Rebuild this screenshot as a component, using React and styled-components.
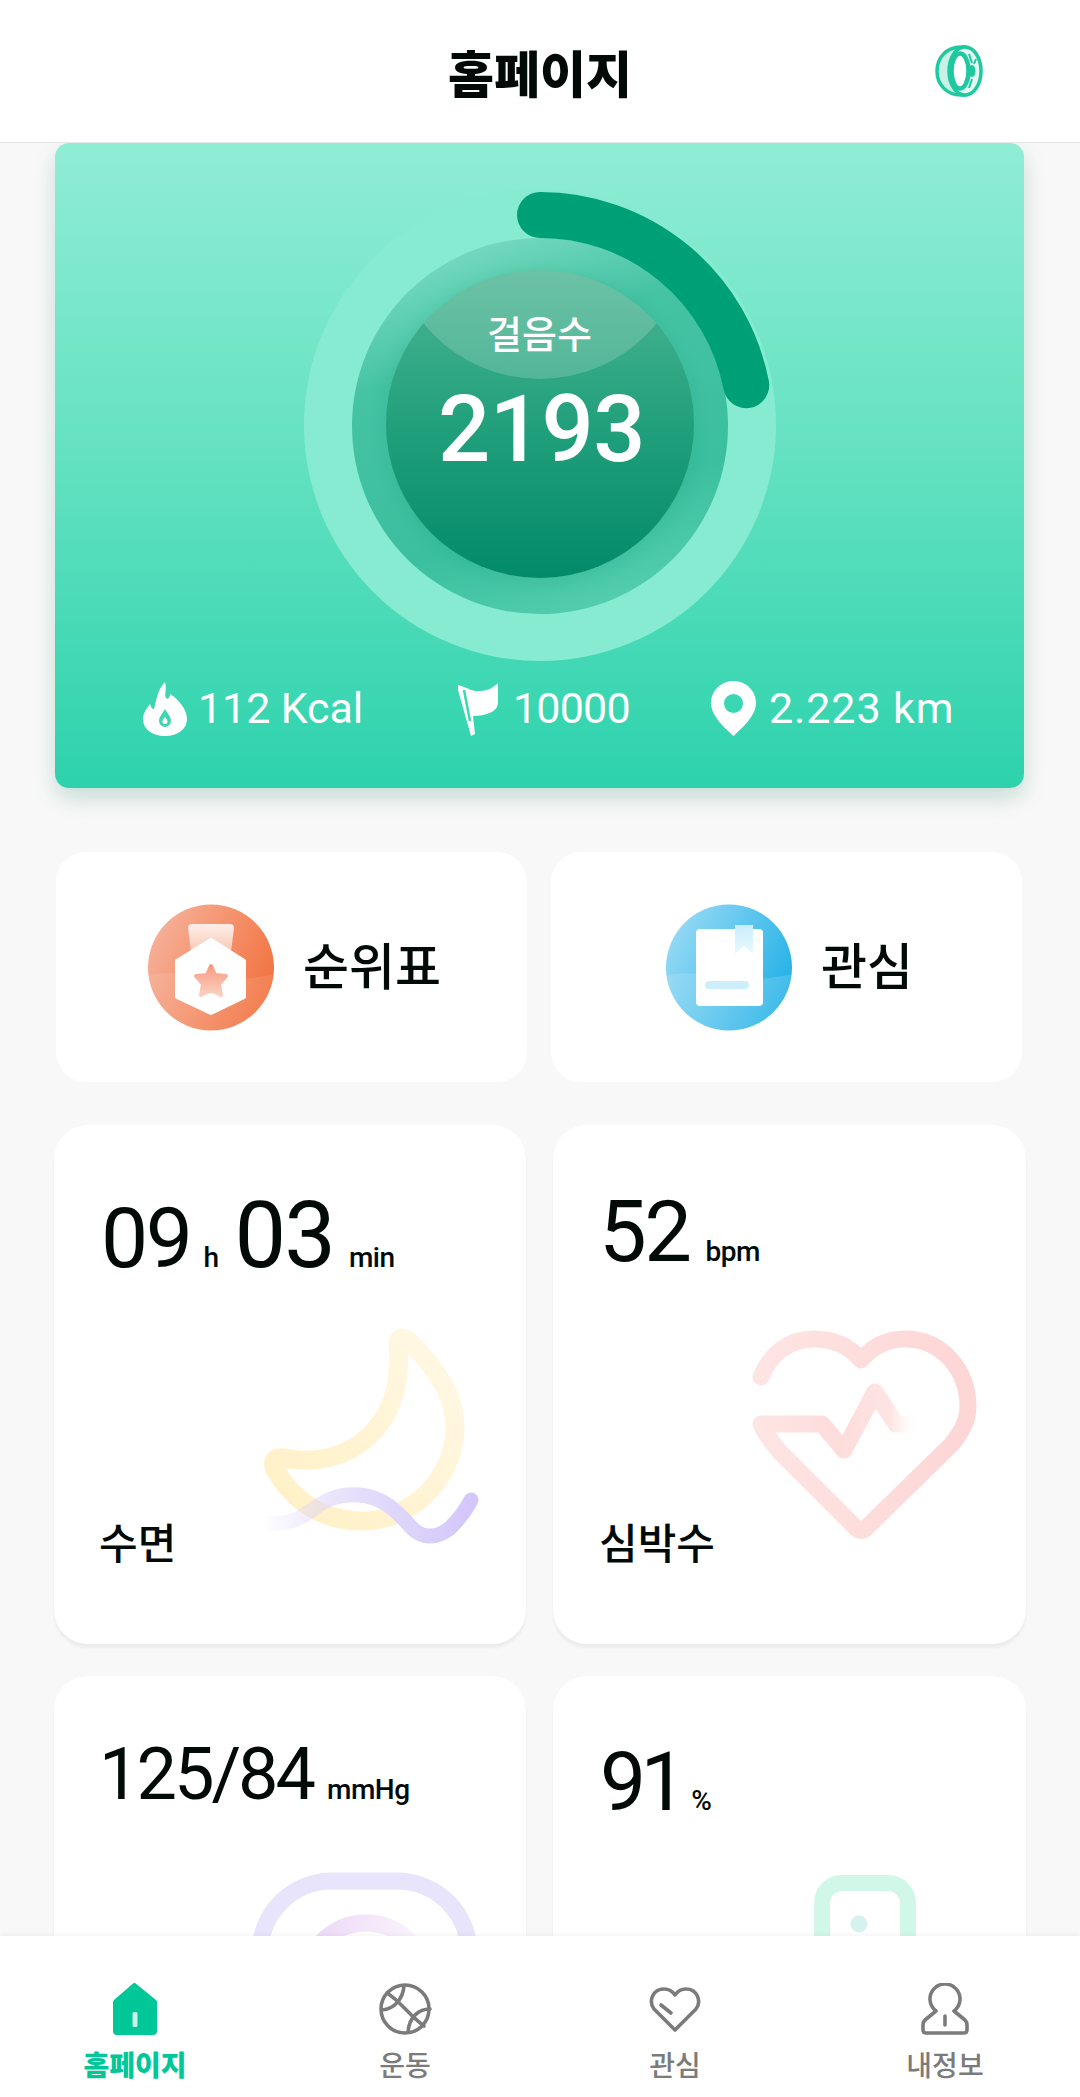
import React from "react";
import styled, { createGlobalStyle } from "styled-components";

const Global = createGlobalStyle`
  html, body { margin: 0; padding: 0; background: #f8f8f8; }
  * { box-sizing: border-box; }
`;
const KR = `"Noto Sans CJK KR", "Noto Sans", sans-serif`;
const NUM = `Roboto, "Noto Sans CJK KR", sans-serif`;

const Page = styled.div`
  width: 1080px; height: 2097px; display: flex; flex-direction: column; overflow: hidden; background: #f8f8f8; font-family: ${KR};
`;
const Header = styled.header`
  flex: none; height: 143px; background: #fff; border-bottom: 1px solid #e6e6e6; position: relative;
  display: flex; align-items: center; justify-content: center;
`;
const Title = styled.h1`
  margin: 0; font-size: 50px; line-height: 1; font-weight: 900; color: #020a08;
`;
const RingButton = styled.div`
  position: absolute; left: 935px; top: 45px; width: 48px; height: 52px; display: flex;
`;
const Main = styled.main`
  flex: 1; min-height: 0; overflow: hidden;
`;
const Hero = styled.section`
  width: 969px; height: 645px; margin-left: 55px; border-radius: 14px;
  background: linear-gradient(180deg, #90edd5 0%, #62e1c0 50%, #2dd2ad 100%);
  box-shadow: 0 10px 22px rgba(0, 110, 80, 0.2);
  padding-top: 46px;
`;
const Gauge = styled.div`
  position: relative; width: 472px; height: 472px; margin: 0 auto; display: flex;
`;
const GaugeText = styled.div`
  position: absolute; left: 0; right: 0; top: 116px; display: flex; flex-direction: column; align-items: center; color: #fff;
`;
const GaugeLabel = styled.div`
  font-size: 38px; line-height: 54px; font-weight: 500;
`;
const GaugeValue = styled.div`
  font-family: ${NUM}; font-size: 92px; line-height: 110px; font-weight: 500; margin: 16px 0 0 4px; letter-spacing: -0.5px;
`;
const StatRow = styled.div`
  display: flex; margin-top: 20px; padding-left: 88px;
`;
const Stat = styled.div`
  width: ${p => p.$w}px; display: flex; align-items: center; gap: ${p => p.$gap}px; color: #fff;
  font-family: ${NUM}; font-size: 43px; font-weight: 400; line-height: 55px; letter-spacing: ${p => p.$ls}px; white-space: nowrap;
`;
const Actions = styled.div`
  display: flex; gap: 24px; margin: 64px 0 0 56px;
`;
const Action = styled.div`
  width: 471px; height: 230px; background: #fff; border-radius: 30px; display: flex; align-items: center;
  padding-left: ${p => p.$pad}px; gap: 29px;
  font-size: 50px; font-weight: 500; color: #020a08;
`;
const ActionText = styled.span`
  margin-bottom: 8px;
`;
const StatGrid = styled.div`
  display: grid; grid-template-columns: 472px 473px; column-gap: 27px; row-gap: 32px; margin: 43px 0 0 54px;
`;
const Card = styled.div`
  position: relative; height: 519px; background: #fff; border-radius: 34px;
  box-shadow: 0 4px 3px rgba(0, 0, 0, 0.05);
  padding: ${p => p.$top}px 0 0 ${p => p.$left}px;
  color: #020a08; overflow: hidden;
`;
const ValueLine = styled.div`
  display: flex; align-items: baseline; font-family: ${NUM}; height: 84px; line-height: 84px; white-space: nowrap;
`;
const Big = styled.span`
  font-size: ${p => p.$s}px; font-weight: 400; letter-spacing: ${p => p.$ls ?? -2.5}px;
  margin-right: ${p => p.$mr ?? 0}px;
`;
const Unit = styled.span`
  font-size: ${p => p.$s ?? 28}px; font-weight: 500; letter-spacing: -0.5px; margin-right: ${p => p.$mr ?? 0}px; margin-left: ${p => p.$ml ?? 16}px;
`;
const CardLabel = styled.div`
  position: absolute; left: ${p => p.$left}px; top: 384px; font-size: 42px; line-height: 64px; font-weight: 500;
`;
const Art = styled.svg`
  position: absolute; left: 0; top: 0; width: 100%; height: 100%; pointer-events: none;
`;
const Nav = styled.nav`
  flex: none; height: 161px; background: #fff; box-shadow: 0 -2px 4px rgba(0, 0, 0, 0.04); position: relative;
  display: grid; grid-template-columns: repeat(4, 270px); padding-top: 47px;
`;
const NavItem = styled.div`
  display: flex; flex-direction: column; align-items: center; color: ${p => (p.$active ? "#00c797" : "#7b7b7b")};
  font-size: 28px; font-weight: ${p => (p.$active ? 900 : 500)}; line-height: 40px;
`;
const NavIcon = styled.svg`
  width: 54px; height: 52px; margin-bottom: 9px; display: block;
`;

const Ring = () => (
  <svg width="48" height="52" viewBox="0 0 48 52">
    <path d="M26 2C11 2 2 13 2 26s9 24 24 24h4V2z" fill="#c9f2e6" stroke="#1fc9a0" strokeWidth="3.500" />
    <ellipse cx="30" cy="26" rx="16" ry="24" fill="#e3f8f1" stroke="#1fc9a0" strokeWidth="3.500" />
    <ellipse cx="25" cy="26" rx="8.500" ry="17.500" fill="#fff" stroke="#1fc9a0" strokeWidth="4.500" />
    <ellipse cx="37" cy="26" rx="3.500" ry="6" fill="#1fc9a0" />
    <path d="M34 9l3 9M41 14l-2 5M34 43l3-9" stroke="#1fc9a0" strokeWidth="2" />
  </svg>
);

const GaugeArt = () => (
  <svg width="472" height="472" viewBox="0 0 472 472">
    <defs>
      <linearGradient id="disc" x1="0.25" y1="0" x2="0.6" y2="1">
        <stop offset="0" stopColor="#7bdcc3" />
        <stop offset="0.3" stopColor="#45c3a3" />
        <stop offset="0.75" stopColor="#3bbf9e" />
        <stop offset="1" stopColor="#52cdad" />
      </linearGradient>
      <linearGradient id="core" x1="0" y1="0" x2="0" y2="1">
        <stop offset="0" stopColor="#4cb592" />
        <stop offset="0.5" stopColor="#22a07c" />
        <stop offset="1" stopColor="#028a69" />
      </linearGradient>
      <clipPath id="coreClip"><circle cx="236" cy="235" r="154" /></clipPath>
      <filter id="soft" x="-30%" y="-30%" width="160%" height="160%"><feGaussianBlur stdDeviation="8" /></filter>
    </defs>
    <circle cx="236" cy="236" r="236" fill="#86ebd1" />
    <circle cx="236" cy="237" r="188" fill="url(#disc)" />
    <circle cx="236" cy="238" r="156" fill="#0f8f6c" opacity="0.16" filter="url(#soft)" />
    <circle cx="236" cy="235" r="154" fill="url(#core)" />
    <g clipPath="url(#coreClip)"><circle cx="236" cy="40" r="150" fill="#fff" opacity="0.18" /></g>
    <path d="M236 26A210 210 0 0 1 442.200 196.200" fill="none" stroke="#00a077" strokeWidth="46" strokeLinecap="round" />
  </svg>
);

const Fire = () => (
  <svg width="44" height="54" viewBox="0 0 44 54">
    <path d="M22 0c2 8-1 12 1 16 2 2 4-1 4-4 8 5 17 15 17 25 0 10-9 17-22 17S0 47 0 37c0-6 4-11 7-15 1 3 2 5 4 5 2-7 3-19 11-27z" fill="#fff" />
    <path d="M22 27c3 5 6 8 6 12a6 6 0 0 1-12 0c0-4 3-7 6-12z" fill="#3fd7b3" />
    <path d="M22 35c1.500 2 2.500 3 2.500 4.500a2.500 2.500 0 0 1-5 0c0-1.500 1-2.500 2.500-4.500z" fill="#fff" />
  </svg>
);
const Flag = () => (
  <svg width="40" height="54" viewBox="0 0 40 54">
    <path d="M0 3c10 3 15 7 22 6 7 0 13-3 18-8 0 10 1 18-1 24-3 6-14 9-24 9L17 52l-4 2L0 8z" fill="#fff" />
    <path d="M6 8l6 31" stroke="#3fd7b3" strokeWidth="2.500" />
  </svg>
);
const Pin = () => (
  <svg width="45" height="55" viewBox="0 0 45 55">
    <path fillRule="evenodd" d="M22.500 0C35 0 45 10 45 22c0 13-14 25-22.500 33C14 47 0 35 0 22 0 10 10 0 22.500 0zm0 13a9.500 9.500 0 1 0 0 19 9.500 9.500 0 0 0 0-19z" fill="#fff" />
  </svg>
);

const Medal = () => (
  <svg width="126" height="127" viewBox="0 0 126 127">
    <defs>
      <linearGradient id="org" x1="0" y1="0.2" x2="1" y2="0.7">
        <stop offset="0" stopColor="#f6b39c" />
        <stop offset="1" stopColor="#f2703c" />
      </linearGradient>
      <linearGradient id="cap" x1="0" y1="0" x2="0" y2="1">
        <stop offset="0" stopColor="#fdeee8" />
        <stop offset="1" stopColor="#f9c9b6" />
      </linearGradient>
      <linearGradient id="star" x1="0" y1="0" x2="0" y2="1">
        <stop offset="0" stopColor="#f79d80" />
        <stop offset="1" stopColor="#fbcfc0" />
      </linearGradient>
    </defs>
    <circle cx="63" cy="63.500" r="63" fill="url(#org)" />
    <path d="M0.500 72c30-10 70 12 125-2-4 32-30 57-62 57C30 127 4 102 0.500 72z" fill="#fff" opacity="0.1" />
    <path d="M40 24a4 4 0 0 1 4-4h38a4 4 0 0 1 4 4l-3 24H43z" fill="url(#cap)" />
    <path d="M63 36l33 21v36L63 109 29 93V57z" fill="#fff" stroke="#fff" strokeWidth="4" strokeLinejoin="round" />
    <path d="M63 62l4 9 11 1-7 8 2 11-10-5-10 5 2-11-7-8 11-1z" fill="url(#star)" stroke="url(#star)" strokeWidth="4" strokeLinejoin="round" />
  </svg>
);
const Book = () => (
  <svg width="126" height="127" viewBox="0 0 126 127">
    <defs>
      <linearGradient id="blu" x1="0" y1="0.2" x2="1" y2="0.7">
        <stop offset="0" stopColor="#9adbf5" />
        <stop offset="1" stopColor="#20b0e6" />
      </linearGradient>
      <linearGradient id="mark" x1="0" y1="0" x2="0" y2="1">
        <stop offset="0" stopColor="#c9edfa" />
        <stop offset="1" stopColor="#eafaff" />
      </linearGradient>
    </defs>
    <circle cx="63" cy="63.500" r="63" fill="url(#blu)" />
    <path d="M0.500 72c30-10 70 12 125-2-4 32-30 57-62 57C30 127 4 102 0.500 72z" fill="#fff" opacity="0.14" />
    <rect x="30" y="25" width="67" height="77" rx="4" fill="#fff" />
    <path d="M69 21h18v29l-9-8-9 8z" fill="url(#mark)" />
    <rect x="39" y="77" width="44" height="8" rx="4" fill="#cdeffa" />
  </svg>
);

const Moon = () => (
  <Art>
    <defs>
      <linearGradient id="moonG" x1="0" y1="1" x2="1" y2="0">
        <stop offset="0" stopColor="#fff0c4" />
        <stop offset="1" stopColor="#fff8e6" />
      </linearGradient>
      <linearGradient id="waveG" x1="0" y1="0" x2="1" y2="0">
        <stop offset="0" stopColor="#d6caf9" stopOpacity="0" />
        <stop offset="0.55" stopColor="#e2dbfb" />
        <stop offset="1" stopColor="#d3c6fa" />
      </linearGradient>
    </defs>
    <path transform="translate(-54 -1125)" d="M398 1346C398 1336 404 1336 410 1342C440 1372 456 1400 455 1430C453 1480 410 1522 360 1521C318 1520 292 1498 275 1470C270 1458 278 1456 290 1459C345 1468 406 1430 398 1346Z" fill="none" stroke="url(#moonG)" strokeWidth="19" strokeLinejoin="round" />
    <path transform="translate(-54 -1125)" d="M262 1523C282 1525 296 1522 312 1510C330 1496 344 1494 360 1495C382 1497 396 1510 410 1526C422 1540 438 1538 450 1528C460 1518 466 1510 471 1500" fill="none" stroke="url(#waveG)" strokeWidth="15" strokeLinecap="round" />
  </Art>
);
const HeartArt = () => (
  <Art>
    <defs>
      <linearGradient id="heartG" x1="0" y1="0" x2="1" y2="0">
        <stop offset="0" stopColor="#fde5e3" />
        <stop offset="1" stopColor="#fdd6d6" />
      </linearGradient>
      <linearGradient id="pulseG" gradientUnits="userSpaceOnUse" x1="765" y1="0" x2="926" y2="0">
        <stop offset="0" stopColor="#fde5e3" />
        <stop offset="0.5" stopColor="#fddcdc" />
        <stop offset="0.82" stopColor="#fde5e3" />
        <stop offset="1" stopColor="#fff" stopOpacity="0" />
      </linearGradient>
    </defs>
    <path transform="translate(-559 -1125)" d="M767 1377C776 1354 795 1339 820 1339C840 1339 856 1347 867 1360C878 1347 892 1339 911 1339C948 1339 974 1370 974 1407C974 1420 968 1432 957 1445L874 1526C869 1532 865 1532 860 1526L786 1452C776 1440 770 1432 767 1424" fill="none" stroke="url(#heartG)" strokeWidth="17" strokeLinecap="round" strokeLinejoin="round" />
    <path transform="translate(-559 -1125)" d="M767 1424H828L850 1450L881 1392L902 1424H932" fill="none" stroke="url(#pulseG)" strokeWidth="17" strokeLinecap="butt" strokeLinejoin="round" />
  </Art>
);
const Pressure = () => (
  <Art>
    <defs>
      <linearGradient id="bpG" x1="0" y1="0" x2="1" y2="0.3">
        <stop offset="0" stopColor="#ecd6f6" />
        <stop offset="1" stopColor="#fdf8fd" />
      </linearGradient>
    </defs>
    <rect x="206" y="205" width="209" height="260" rx="72" fill="none" stroke="#e8e4fb" strokeWidth="17" />
    <circle cx="312" cy="307" r="60" fill="none" stroke="url(#bpG)" strokeWidth="17" />
  </Art>
);
const Oxygen = () => (
  <Art>
    <rect x="269" y="207" width="86" height="180" rx="20" fill="none" stroke="#d0f7e8" strokeWidth="16" />
    <circle cx="306" cy="248" r="8.500" fill="#d5f2ef" />
  </Art>
);

const HomeIcon = () => (
  <NavIcon viewBox="0 0 54 52">
    <path d="M27 0L48 17a3 3 0 0 1 1 2.500V48a4 4 0 0 1-4 4H9a4 4 0 0 1-4-4V19.500A3 3 0 0 1 6 17L24.500 1a3 3 0 0 1 2.500-1z" fill="#00c797" />
    <rect x="24.500" y="29" width="5" height="15" rx="1.500" fill="#c8f3e6" />
  </NavIcon>
);
const Line = { fill: "none", stroke: "#7b7b7b", strokeWidth: 3.6, strokeLinecap: "round", strokeLinejoin: "round" };
const BallIcon = () => (
  <NavIcon viewBox="0 0 54 52">
    <circle cx="27" cy="26" r="24" {...Line} />
    <path d="M9 10C22 18 31 32 46 43M26 3C25 15 17 26 4 27M52 26C41 26 31 34 30 49" {...Line} />
  </NavIcon>
);
const HeartIcon = () => (
  <NavIcon viewBox="0 0 54 52">
    <path d="M27 47L6 26C0 18 5 6 16 6C21 6 25 9 27 12C29 9 33 6 38 6C49 6 54 18 48 26Z" {...Line} />
    <path d="M13 22L23 30" {...Line} />
  </NavIcon>
);
const UserIcon = () => (
  <NavIcon viewBox="0 0 54 52">
    <path d="M18 28L7 37Q5 39 5 42V47Q5 50 8 50H46Q49 50 49 47V42Q49 39 47 37L36 28A15 15 0 1 0 18 28Z" {...Line} />
    <path d="M27 33V42" {...Line} />
  </NavIcon>
);

export default function App() {
  return (
    <Page>
      <Global />
      <Header>
        <Title>홈페이지</Title>
        <RingButton><Ring /></RingButton>
      </Header>
      <Main>
        <Hero>
          <Gauge>
            <GaugeArt />
            <GaugeText>
              <GaugeLabel>걸음수</GaugeLabel>
              <GaugeValue>2193</GaugeValue>
            </GaugeText>
          </Gauge>
          <StatRow>
            <Stat $w={315} $gap={11} $ls={-0.1}><Fire />112 Kcal</Stat>
            <Stat $w={253} $gap={15} $ls={-0.8}><Flag />10000</Stat>
            <Stat $w={260} $gap={13} $ls={0.9}><Pin />2.223 km</Stat>
          </StatRow>
        </Hero>
        <Actions>
          <Action $pad={92}><Medal /><ActionText>순위표</ActionText></Action>
          <Action $pad={115}><Book /><ActionText>관심</ActionText></Action>
        </Actions>
        <StatGrid>
          <Card $top={69} $left={47}>
            <ValueLine>
              <Big $s={84}>09</Big><Unit $ml={13} $mr={16}>h</Unit><Big $s={92} $ls={-2}>03</Big><Unit $ml={15}>min</Unit>
            </ValueLine>
            <CardLabel $left={45}>수면</CardLabel>
            <Moon />
          </Card>
          <Card $top={65} $left={46}>
            <ValueLine>
              <Big $s={85}>52</Big><Unit>bpm</Unit>
            </ValueLine>
            <CardLabel $left={46}>심박수</CardLabel>
            <HeartArt />
          </Card>
          <Card $top={57} $left={45}>
            <ValueLine>
              <Big $s={72} $ls={-3}>125/84</Big><Unit $ml={14}>mmHg</Unit>
            </ValueLine>
            <Pressure />
          </Card>
          <Card $top={64} $left={47}>
            <ValueLine>
              <Big $s={82} $ls={-5.5}>91</Big><Unit $ml={10}>%</Unit>
            </ValueLine>
            <Oxygen />
          </Card>
        </StatGrid>
      </Main>
      <Nav>
        <NavItem $active><HomeIcon />홈페이지</NavItem>
        <NavItem><BallIcon />운동</NavItem>
        <NavItem><HeartIcon />관심</NavItem>
        <NavItem><UserIcon />내정보</NavItem>
      </Nav>
    </Page>
  );
}
